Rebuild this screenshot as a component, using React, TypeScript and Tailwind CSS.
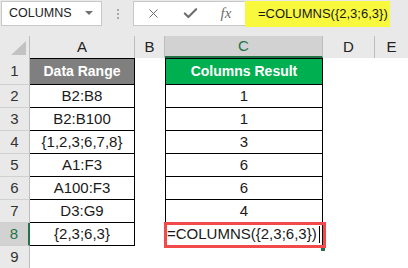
import React from 'react';
import { X, Check } from 'lucide-react';

const rows = [
  { n: 2, range: 'B2:B8', result: '1' },
  { n: 3, range: 'B2:B100', result: '1' },
  { n: 4, range: '{1,2,3;6,7,8}', result: '3' },
  { n: 5, range: 'A1:F3', result: '6' },
  { n: 6, range: 'A100:F3', result: '6' },
  { n: 7, range: 'D3:G9', result: '4' },
];

const RowHead: React.FC<{ n: number; active?: boolean }> = ({ n, active }) => (
  <div
    className={
      'w-[30px] shrink-0 flex items-center justify-center border-b border-[#d0d0d0] ' +
      (active
        ? 'bg-[#d2d2d2] text-[#217346] border-r-2 border-r-[#217346]'
        : 'bg-[#e9e9e9] text-[#333] border-r border-r-[#bdbdbd]')
    }
  >
    {n}
  </div>
);

const App: React.FC = () => {
  return (
    <div
      className="w-[408px] h-[268px] overflow-hidden bg-white relative text-[15px] text-[#1a1a1a]"
      style={{ fontFamily: '"Liberation Sans", Arial, sans-serif' }}
    >
      {/* formula bar */}
      <div className="h-[36px] bg-[#e9e9e9] flex items-start pt-[1px] pl-[1px]">
        <div className="w-[101px] h-[25px] bg-white border border-[#c8c8c8] flex items-center pl-[7px] pr-[8px]">
          <span className="text-[12.5px] text-[#222] flex-1">COLUMNS</span>
          <svg width="8" height="5" viewBox="0 0 8 5">
            <path d="M0 0 L8 0 L4 4 Z" fill="#707070" />
          </svg>
        </div>
        <div className="w-[31px] h-[25px] flex flex-col items-center justify-center gap-[2px]">
          <div className="w-[2px] h-[2px] bg-[#a8a8a8]" />
          <div className="w-[2px] h-[2px] bg-[#a8a8a8]" />
          <div className="w-[2px] h-[2px] bg-[#a8a8a8]" />
        </div>
        <div className="w-[112px] h-[25px] bg-white border border-r-0 border-[#c8c8c8] flex items-center">
          <div className="w-[38px] flex justify-center">
            <X size={15} strokeWidth={1.6} className="text-[#6e6e6e]" />
          </div>
          <div className="w-[36px] flex justify-center">
            <Check size={17} strokeWidth={3} className="text-[#6e6e6e]" />
          </div>
          <div
            className="w-[36px] flex justify-center text-[15px] italic text-[#6e6e6e]"
            style={{ fontFamily: '"Liberation Serif", serif' }}
          >
            fx
          </div>
        </div>
        <div className="w-[145px] h-[26px] bg-[#f8f83c] flex items-center pl-[13px] text-[13px] text-[#1a1a1a]">
          =COLUMNS({'{'}2,3;6,3{'}'})
        </div>
      </div>

      {/* column headers */}
      <div className="h-[22px] flex bg-[#e9e9e9] text-[15px] text-[#222]">
        <div className="w-[30px] shrink-0 border-r border-[#bdbdbd] flex items-end justify-end pr-[3px] pb-[3px]">
          <svg width="15" height="14" viewBox="0 0 15 14">
            <path d="M15 0 L15 14 L0 14 Z" fill="#c2c2c2" />
          </svg>
        </div>
        <div className="w-[105px] shrink-0 border-r border-[#bdbdbd] flex items-center justify-center">A</div>
        <div className="w-[30px] shrink-0 border-r border-[#bdbdbd] flex items-center justify-center">B</div>
        <div className="w-[158px] shrink-0 border-r border-[#bdbdbd] border-b-2 border-b-[#217346] bg-[#d2d2d2] text-[#217346] flex items-center justify-center">
          C
        </div>
        <div className="w-[52px] shrink-0 border-r border-[#bdbdbd] flex items-center justify-center">D</div>
        <div className="flex-1 flex items-center justify-center">E</div>
      </div>

      {/* row 1 */}
      <div className="h-[27px] flex">
        <RowHead n={1} />
        <div className="w-[105px] shrink-0 bg-[#7f7f7f] border-t border-r border-b border-black text-white font-bold text-[14px] flex items-center justify-center">
          Data Range
        </div>
        <div className="w-[30px] shrink-0" />
        <div className="w-[158px] shrink-0 bg-[#00b050] border border-black text-white font-bold text-[14px] flex items-center justify-center">
          Columns Result
        </div>
      </div>

      {rows.map((r) => (
        <div key={r.n} className="h-[23px] flex">
          <RowHead n={r.n} />
          <div className="w-[105px] shrink-0 border-r border-b border-black flex items-center justify-center">
            {r.range}
          </div>
          <div className="w-[30px] shrink-0" />
          <div className="w-[158px] shrink-0 border-l border-r border-b border-black flex items-center justify-center">
            {r.result}
          </div>
        </div>
      ))}

      {/* row 8 */}
      <div className="h-[23px] flex relative">
        <RowHead n={8} active />
        <div className="w-[105px] shrink-0 border-r border-b border-black flex items-center justify-center">
          {'{2,3;6,3}'}
        </div>
        <div className="w-[30px] shrink-0" />
        <div className="w-[158px] shrink-0 border-l border-r border-b border-black flex items-center pl-[1px] whitespace-nowrap">
          =COLUMNS({'{'}2,3;6,3{'}'})
          <span className="inline-block w-[1px] h-[17px] bg-black ml-[2px]" />
        </div>
        <div className="absolute left-[164px] top-[-1px] w-[162px] h-[26px] border-[3px] border-[#f24a4a] pointer-events-none" />
        <div className="absolute left-[321px] top-[25px] w-[4px] h-[3px] bg-[#217346]" />
      </div>

      {/* row 9 */}
      <div className="h-[23px] flex">
        <RowHead n={9} />
      </div>
    </div>
  );
};

export default App;
